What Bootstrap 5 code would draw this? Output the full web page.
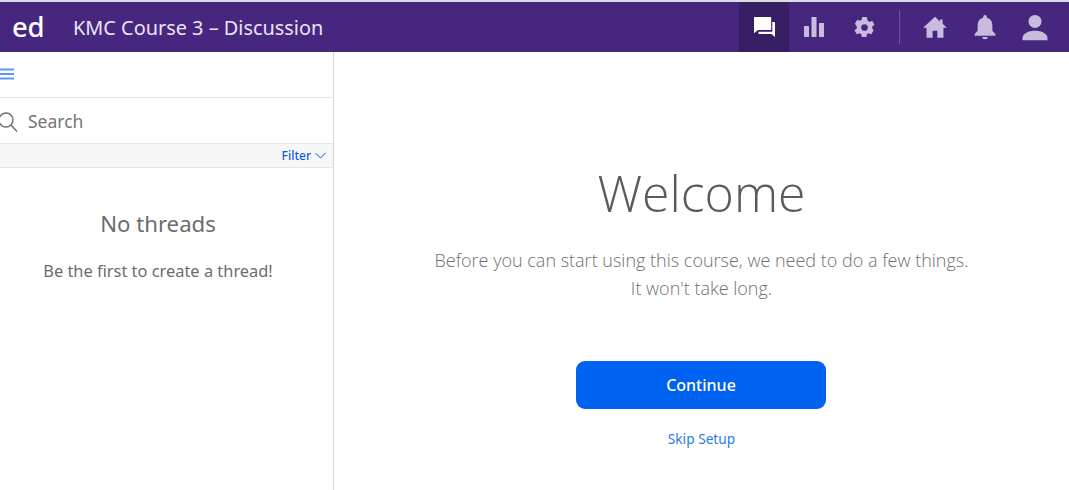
<!DOCTYPE html>
<html lang="en">
<head>
<meta charset="utf-8">
<title>KMC Course 3 – Discussion</title>
<link href="https://cdn.jsdelivr.net/npm/bootstrap@5.3.0/dist/css/bootstrap.min.css" rel="stylesheet">
<style>
html,body{height:490px;overflow:hidden}
body{font-family:"Noto Sans","Open Sans",sans-serif;color:#5f5f5f;background:#fff}
.topstrip{height:2px;background:#dcdcdc}
.edbar{height:50px;background:#47267f;color:#fff;padding-right:9px}
.edlogo{width:57px;font-size:27.5px;font-weight:500;line-height:50px;padding-left:12px;letter-spacing:-.4px}
.edtitle{margin-left:16px;font-size:19.9px;line-height:50px;padding-top:1px;color:#e9e4f1;font-weight:400}
.navic{width:50px;height:50px;display:flex;align-items:center;justify-content:center}
.navic svg{fill:#c8bbdd;display:block}
.navic.on{background:#371d63}
.navic.on svg{fill:#fff}
.navsep{width:1px;height:34px;background:#6f56a0;margin:0 10px}
.bodyrow{height:438px}
.sidepane{width:334px;border-right:1px solid #d6d6d6}
.menurow{height:46px;border-bottom:1px solid #e6e6e6;padding-top:16px}
.searchrow{height:46px;border-bottom:1px solid #e6e6e6;font-size:17.5px;color:#757575;padding-left:28px;line-height:47px;position:relative}
.searchrow svg{position:absolute;left:-6px;top:12px}
.filterrow{height:24px;background:#f7f7f7;border-bottom:1px solid #e6e6e6;font-size:12px;line-height:24px;color:#0a5ce6;font-weight:500;padding-right:7px}
.nothreads{font-size:22.2px;line-height:30px;margin-top:41px;text-align:center;width:316px;color:#6c6c6c}
.firstthread{font-size:16.4px;line-height:22px;margin-top:21px;text-align:center;width:316px;color:#6c6c6c}
.welcomehead{font-family:"Open Sans","Noto Sans",sans-serif;font-weight:300;font-size:50px;line-height:70px;margin:106px 0 0;color:#5a5a5a}
.welcometext{font-family:"Open Sans","Noto Sans",sans-serif;font-weight:300;font-size:18px;line-height:28px;margin:18px 0 0;color:#707070}
.gobtn{width:250px;height:48px;background:#0062f0;border:0;border-radius:9px;color:#fff;font-size:16px;font-weight:500;margin:59px 1px 0 0;padding:0 0 1px}
.gobtn:hover{background:#0062f0;color:#fff}
.skiplink{font-size:13.7px;color:#2c7ce0;text-decoration:none;margin-top:20px;line-height:20px}
</style>
</head>
<body>
<div class="topstrip"></div>
<nav class="edbar d-flex align-items-center">
  <div class="edlogo">ed</div>
  <div class="edtitle flex-grow-1">KMC Course 3 – Discussion</div>
  <div class="d-flex align-items-center">
    <a class="navic on" aria-label="Discussion"><svg width="24" height="24" viewBox="0 0 24 24"><path d="M2.600 2h15.800a.8.8 0 0 1 .8.8V14.200a.8.8 0 0 1-.8.8H6L2 18.200V2.800a.8.8 0 0 1 .6-.8z"/><path d="M20.300 7h2a.8.8 0 0 1 .7.8V22l-3.500-3H7.200a.8.8 0 0 1-.8-.8V16.700h13.900z"/></svg></a>
    <a class="navic" aria-label="Analytics"><svg width="24" height="24" viewBox="0 0 24 24"><path d="M2 11h5v11H2zM9.500 2h5v20h-5zM17 8h5v14h-5z"/></svg></a>
    <a class="navic" aria-label="Settings"><svg width="25" height="25" viewBox="0 0 24 24"><path fill-rule="evenodd" d="M19.400 13a7.700 7.700 0 0 0 0-2l2.200-1.700-2.200-3.700-2.600 1a7.600 7.600 0 0 0-1.700-1L14.200 2h-4.400l-.5 2.600a7.600 7.600 0 0 0-1.700 1l-2.600-1-2.200 3.700L4.600 11a7.700 7.700 0 0 0 0 2l-2.200 1.700 2.200 3.700 2.600-1a7.600 7.600 0 0 0 1.700 1l.5 2.600h4.400l.5-2.600a7.600 7.600 0 0 0 1.700-1l2.600 1 2.200-3.700zM12 15.200a3.200 3.200 0 1 1 0-6.400 3.200 3.200 0 0 1 0 6.400z"/></svg></a>
    <span class="navsep"></span>
    <a class="navic" aria-label="Home"><svg width="26" height="26" viewBox="0 0 24 24"><path d="M12 2.500 1 12.800h3.200V22h5.600v-6.500h4.400V22h5.600v-9.200H23l-4-3.700V5h-2.500v2z"/></svg></a>
    <a class="navic" aria-label="Notifications"><svg width="26" height="26" viewBox="0 0 24 24"><path d="M12 1a1.700 1.700 0 0 0-1.700 1.700v.8C7 4.300 5.200 7 5.200 10.200v5.300L2.400 18.500V20h19.200v-1.500l-2.800-3v-5.300c0-3.200-1.800-5.900-5.100-6.700v-.8A1.700 1.700 0 0 0 12 1zM9.500 21.200a2.500 2 0 0 0 5 0z"/></svg></a>
    <a class="navic" aria-label="Account"><svg width="30" height="30" viewBox="0 0 24 24"><circle cx="12" cy="7.500" r="5.200"/><path d="M2 22.500v-1.500c0-4 5-6 10-6s10 2 10 6v1.500z"/></svg></a>
  </div>
</nav>
<div class="bodyrow d-flex">
  <aside class="sidepane flex-shrink-0">
    <div class="menurow"><svg class="d-block" width="15" height="13" viewBox="0 0 15 13"><path d="M0 1.500h14M0 6h14M0 10.500h14" stroke="#5a97f6" stroke-width="2" fill="none"/></svg></div>
    <div class="searchrow">Search<svg width="24" height="24" viewBox="0 0 24 24" fill="none" stroke="#6d6d6d" stroke-width="1.400"><circle cx="12" cy="10" r="7"/><path d="m17 15 6 6.500"/></svg></div>
    <div class="filterrow d-flex align-items-center justify-content-end gap-1">Filter <svg width="11" height="7" viewBox="0 0 11 7" fill="none" stroke="#0a5ce6" stroke-width="1"><path d="m.5 1 5 5 5-5"/></svg></div>
    <div class="nothreads">No threads</div>
    <div class="firstthread">Be the first to create a thread!</div>
  </aside>
  <main class="flex-grow-1 d-flex flex-column align-items-center text-center">
    <h1 class="welcomehead">Welcome</h1>
    <p class="welcometext">Before you can start using this course, we need to do a few things.<br>It won't take long.</p>
    <button class="btn gobtn" type="button">Continue</button>
    <a class="skiplink" href="#">Skip Setup</a>
  </main>
</div>
<script src="https://cdn.jsdelivr.net/npm/bootstrap@5.3.0/dist/js/bootstrap.bundle.min.js"></script>
</body>
</html>
